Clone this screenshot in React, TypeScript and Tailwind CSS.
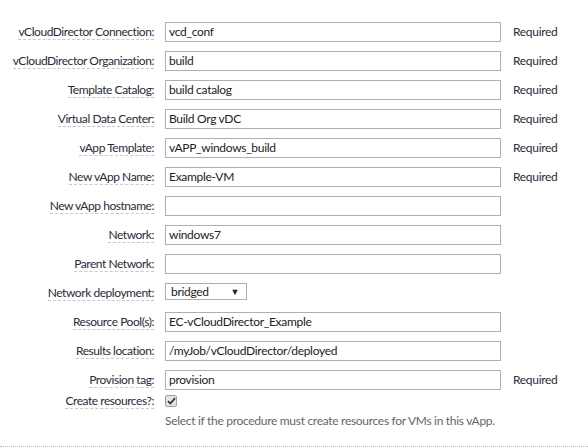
import React from "react";

type Row = { label: string; value?: string; required?: boolean; kind?: "input" | "select" };

const rows: Row[] = [
  { label: "vCloudDirector Connection:", value: "vcd_conf", required: true },
  { label: "vCloudDirector Organization:", value: "build", required: true },
  { label: "Template Catalog:", value: "build catalog", required: true },
  { label: "Virtual Data Center:", value: "Build Org vDC", required: true },
  { label: "vApp Template:", value: "vAPP_windows_build", required: true },
  { label: "New vApp Name:", value: "Example-VM", required: true },
  { label: "New vApp hostname:", value: "" },
  { label: "Network:", value: "windows7" },
  { label: "Parent Network:", value: "" },
  { label: "Network deployment:", value: "bridged", kind: "select" },
  { label: "Resource Pool(s):", value: "EC-vCloudDirector_Example" },
  { label: "Results location:", value: "/myJob/vCloudDirector/deployed" },
  { label: "Provision tag:", value: "provision", required: true },
];

function Label({ text }: { text: string }) {
  return (
    <div className="w-[154px] shrink-0 flex justify-end">
      <span className="whitespace-nowrap tracking-[-0.45px] border-b border-dashed border-[#c8c8c8] leading-[15px] text-[#2a2a3a]">
        {text}
      </span>
    </div>
  );
}

export default function App() {
  return (
    <div
      className="w-[588px] h-[447px] bg-white relative text-[12px] text-[#222] tracking-[-0.3px]"
      style={{ fontFamily: "Lato, 'Noto Sans', sans-serif" }}
    >
      <div className="flex flex-col gap-[9px] pt-[22px]">
        {rows.map((r) => (
          <div key={r.label} className="flex items-center h-[20px]">
            <Label text={r.label} />
            <div className="w-[11px] shrink-0" />
            {r.kind === "select" ? (
              <div className="w-[82px] h-[17px] self-start mt-[0px] border border-[#a9afc2] flex items-center justify-between pl-[5px] pr-[7px]">
                <span>{r.value}</span>
                <span className="text-[9px] leading-none">▼</span>
              </div>
            ) : (
              <div className="w-[336px] h-[20px] border border-[#a9afc2] flex items-center pl-[3px]">
                <span className="whitespace-nowrap">{r.value}</span>
              </div>
            )}
            {r.required && <span className="ml-[12px] text-[#2a2a3a]">Required</span>}
          </div>
        ))}
      </div>
      <div className="flex items-center h-[14px] mt-[4px]">
        <Label text="Create resources?:" />
        <div className="w-[11px] shrink-0" />
        <div className="w-[12px] h-[12px] border border-[#a0a0a0] bg-[#e4e4e4] rounded-[2px] flex items-center justify-center">
          <svg width="9" height="8" viewBox="0 0 9 8">
            <path d="M1 4.2 L3.4 6.5 L8 1.2" stroke="#333" strokeWidth="1.8" fill="none" />
          </svg>
        </div>
      </div>
      <div className="pl-[165px] mt-[5px] text-[#666] leading-[16px] whitespace-nowrap">
        Select if the procedure must create resources for VMs in this vApp.
      </div>
      <div className="absolute left-0 right-0 bottom-0 border-b border-dotted border-[#b5b5b5]" />
    </div>
  );
}
